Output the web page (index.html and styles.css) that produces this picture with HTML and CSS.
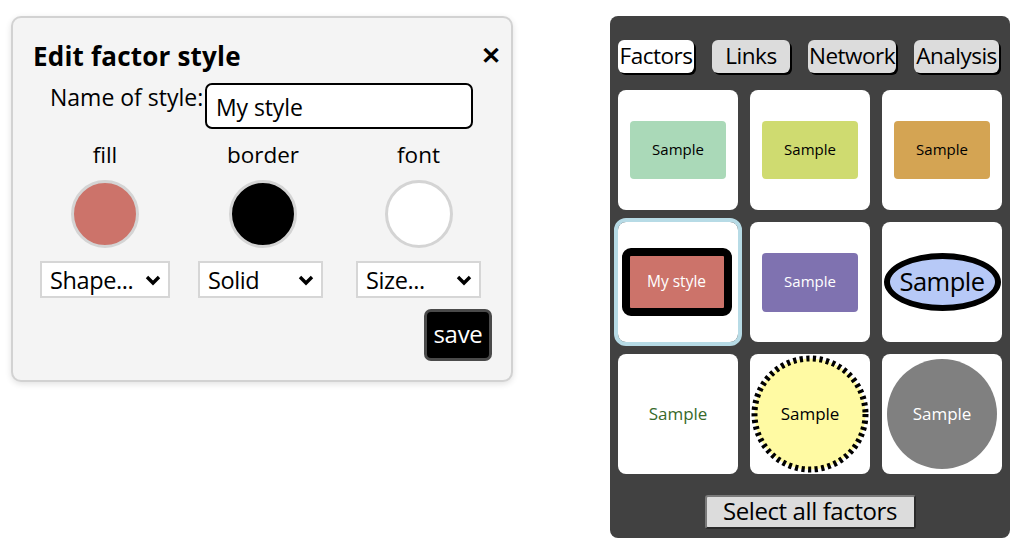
FILE: index.html
```html
<!DOCTYPE html>
<html>
<head>
<meta charset="utf-8">
<link rel="stylesheet" href="styles.css">
</head>
<body>
<div class="page">
  <div class="dialog">
    <div class="title-row">
      <h1 class="title">Edit factor style</h1>
      <span class="close">&#x2715;</span>
    </div>
    <div class="name-row">
      <label class="name-label">Name of style:</label>
      <div class="name-input">My style</div>
    </div>
    <div class="props">
      <div class="prop">
        <div class="prop-label">fill</div>
        <div class="swatch swatch-fill"></div>
        <div class="select sel-shape"><span>Shape...</span><svg class="chev" width="16" height="12" viewBox="0 0 16 12"><polyline points="2,3 8,9 14,3" fill="none" stroke="#000" stroke-width="3.4"/></svg></div>
      </div>
      <div class="prop">
        <div class="prop-label">border</div>
        <div class="swatch swatch-border"></div>
        <div class="select sel-solid"><span>Solid</span><svg class="chev" width="16" height="12" viewBox="0 0 16 12"><polyline points="2,3 8,9 14,3" fill="none" stroke="#000" stroke-width="3.4"/></svg></div>
      </div>
      <div class="prop prop-font">
        <div class="prop-label">font</div>
        <div class="swatch swatch-font"></div>
        <div class="select sel-size"><span>Size...</span><svg class="chev" width="16" height="12" viewBox="0 0 16 12"><polyline points="2,3 8,9 14,3" fill="none" stroke="#000" stroke-width="3.4"/></svg></div>
      </div>
    </div>
    <div class="save-row">
      <button class="save">save</button>
    </div>
  </div>

  <div class="panel">
    <div class="tabs">
      <div class="tab tab-active">Factors</div>
      <div class="tab tab-links">Links</div>
      <div class="tab tab-network">Network</div>
      <div class="tab tab-analysis">Analysis</div>
    </div>
    <div class="grid">
      <div class="cell"><div class="box box-green">Sample</div></div>
      <div class="cell"><div class="box box-lime">Sample</div></div>
      <div class="cell"><div class="box box-orange">Sample</div></div>
      <div class="cell cell-selected"><div class="box box-mine">My style</div></div>
      <div class="cell"><div class="box box-purple">Sample</div></div>
      <div class="cell"><div class="ellipse">Sample</div></div>
      <div class="cell"><div class="plain">Sample</div></div>
      <div class="cell">
        <div class="sun">
          <svg class="sun-ring" width="118" height="118" viewBox="0 0 118 118"><circle cx="59" cy="59" r="55.5" fill="#fffaa3" stroke="#000" stroke-width="6" stroke-dasharray="3.2 3.4"/></svg>
          <span class="sun-text">Sample</span>
        </div>
      </div>
      <div class="cell"><div class="gray-circle">Sample</div></div>
    </div>
    <div class="select-all-row">
      <button class="select-all">Select all factors</button>
    </div>
  </div>
</div>
</body>
</html>
```
FILE: styles.css
```css
html, body {
  margin: 0;
  padding: 0;
  background: #fff;
}
body {
  font-family: "Open Sans", "Noto Sans", sans-serif;
  color: #000;
}
.page {
  display: flex;
  align-items: flex-start;
  padding-top: 16px;
  padding-left: 11px;
}

/* ---------- dialog ---------- */
.dialog {
  width: 502px;
  height: 366px;
  box-sizing: border-box;
  border: 2px solid #d2d2d2;
  border-radius: 10px;
  background: #f4f4f4;
  box-shadow: 0 2px 6px rgba(0,0,0,0.12);
  padding: 20px 11px 0 20px;
  display: flex;
  flex-direction: column;
}
.title-row {
  display: flex;
  justify-content: space-between;
  align-items: flex-start;
}
.title {
  margin: 0;
  font-size: 26px;
  font-weight: 700;
  line-height: 36px;
  letter-spacing: 0.2px;
}
.close {
  font-size: 24px;
  font-weight: 700;
  line-height: 30px;
  margin-top: 2px;
  margin-right: -1px;
}
.name-row {
  display: flex;
  align-items: flex-start;
  margin-left: 17px;
  margin-top: 9px;
}
.name-label {
  font-size: 23px;
  line-height: 28px;
  width: 155px;
  white-space: nowrap;
  letter-spacing: 0;
}
.name-input {
  width: 268px;
  height: 46px;
  box-sizing: border-box;
  border: 2px solid #000;
  border-radius: 7px;
  background: #fff;
  font-size: 23px;
  line-height: 44px;
  padding-left: 9px;
  letter-spacing: -0.1px;
}
.props {
  display: grid;
  grid-template-columns: 158px 158px 158px;
  margin-left: -7px;
  margin-top: 11px;
}
.prop {
  display: flex;
  flex-direction: column;
  align-items: center;
}
.prop-font { margin-left: -5px; }
.prop-label {
  font-size: 22.5px;
  line-height: 30px;
}
.swatch {
  width: 68px;
  height: 68px;
  box-sizing: border-box;
  border-radius: 50%;
  border: 3px solid #d4d4d4;
  margin-top: 10px;
}
.swatch-fill { background: #cc736a; }
.swatch-border { background: #000; }
.swatch-font { background: #fff; }
.select {
  margin-top: 13px;
  height: 37px;
  box-sizing: border-box;
  border: 2px solid #d6d6d6;
  background: #fff;
  display: flex;
  align-items: center;
  justify-content: space-between;
  padding: 0 7px 0 8px;
  font-size: 23.5px;
  letter-spacing: -0.4px;
}
.sel-shape { width: 130px; }
.sel-solid { width: 125px; margin-left: -5px; }
.sel-size { width: 125px; }
.chev { display: block; }
.save-row {
  display: flex;
  justify-content: flex-end;
  margin-top: 11px;
  padding-right: 8px;
}
.save {
  width: 68px;
  height: 52px;
  box-sizing: border-box;
  background: #000;
  color: #fff;
  border: 3px solid #4a4a4a;
  border-radius: 7px;
  font-family: "Open Sans", "Noto Sans", sans-serif;
  font-size: 24px;
  padding: 0 0 4px;
  letter-spacing: -0.3px;
}

/* ---------- panel ---------- */
.panel {
  margin-left: 97px;
  width: 400px;
  height: 522px;
  box-sizing: border-box;
  background: #414141;
  border-radius: 8px;
  padding: 24px 8px 0 8px;
  display: flex;
  flex-direction: column;
}
.tabs {
  display: flex;
  gap: 18px;
}
.tab {
  height: 33px;
  box-sizing: border-box;
  background: #dcdcdc;
  border-radius: 6px;
  box-shadow: 2px 2px 0 #000;
  font-size: 22.5px;
  line-height: 31px;
  padding: 0;
  letter-spacing: -0.5px;
  text-align: center;
  white-space: nowrap;
}
.tab-active { background: #fff; width: 76px; }
.tab-links { width: 78px; }
.tab-network { width: 88px; }
.tab-analysis { width: 85px; }
.grid {
  margin-top: 17px;
  display: grid;
  grid-template-columns: repeat(3, 120px);
  grid-auto-rows: 120px;
  gap: 12px;
}
.cell {
  background: #fff;
  border-radius: 8px;
  display: flex;
  align-items: center;
  justify-content: center;
}
.cell-selected {
  outline: 4px solid #b7dbe6;
  outline-offset: 0;
}
.box {
  width: 96px;
  height: 58px;
  border-radius: 4px;
  display: flex;
  align-items: center;
  justify-content: center;
  font-size: 15px;
  padding-bottom: 2px;
  box-sizing: border-box;
}
.box-green { background: #aad9b8; }
.box-lime { background: #cfdb70; }
.box-orange { background: #d4a453; }
.box-purple { background: #7f72b0; color: #fff; height: 59px; }
.box-mine {
  width: 110px;
  height: 68px;
  border: 8px solid #000;
  border-radius: 9px;
  background: #cc736a;
  color: #fff;
  margin-left: -3px;
  font-size: 15.5px;
}
.ellipse {
  width: 117px;
  height: 58px;
  box-sizing: border-box;
  border: 6px solid #000;
  border-radius: 50%;
  background: #b7c9f7;
  display: flex;
  align-items: center;
  justify-content: center;
  font-size: 25.5px;
  letter-spacing: -0.5px;
  padding-bottom: 3px;
}
.plain {
  color: #386a2b;
  font-size: 17px;
  padding-bottom: 2px;
}
.sun {
  position: relative;
  width: 118px;
  height: 118px;
  display: flex;
  align-items: center;
  justify-content: center;
}
.sun-ring {
  position: absolute;
  left: 0;
  top: 0;
}
.sun-text {
  position: relative;
  font-size: 17px;
  padding-bottom: 2px;
}
.gray-circle {
  width: 110px;
  height: 110px;
  box-sizing: border-box;
  border-radius: 50%;
  background: #808080;
  color: #fff;
  display: flex;
  align-items: center;
  justify-content: center;
  font-size: 17px;
  padding-bottom: 2px;
}
.select-all-row {
  display: flex;
  justify-content: center;
  margin-top: 21px;
}
.select-all {
  width: 211px;
  height: 34px;
  box-sizing: border-box;
  background: #dcdcdc;
  border: 2px solid;
  border-color: #7a7a7a #2a2a2a #2a2a2a #7a7a7a;
  border-radius: 3px;
  font-family: "Open Sans", "Noto Sans", sans-serif;
  font-size: 24px;
  line-height: 28px;
  padding: 0 0 2px;
  color: #000;
  letter-spacing: -0.4px;
}
```
